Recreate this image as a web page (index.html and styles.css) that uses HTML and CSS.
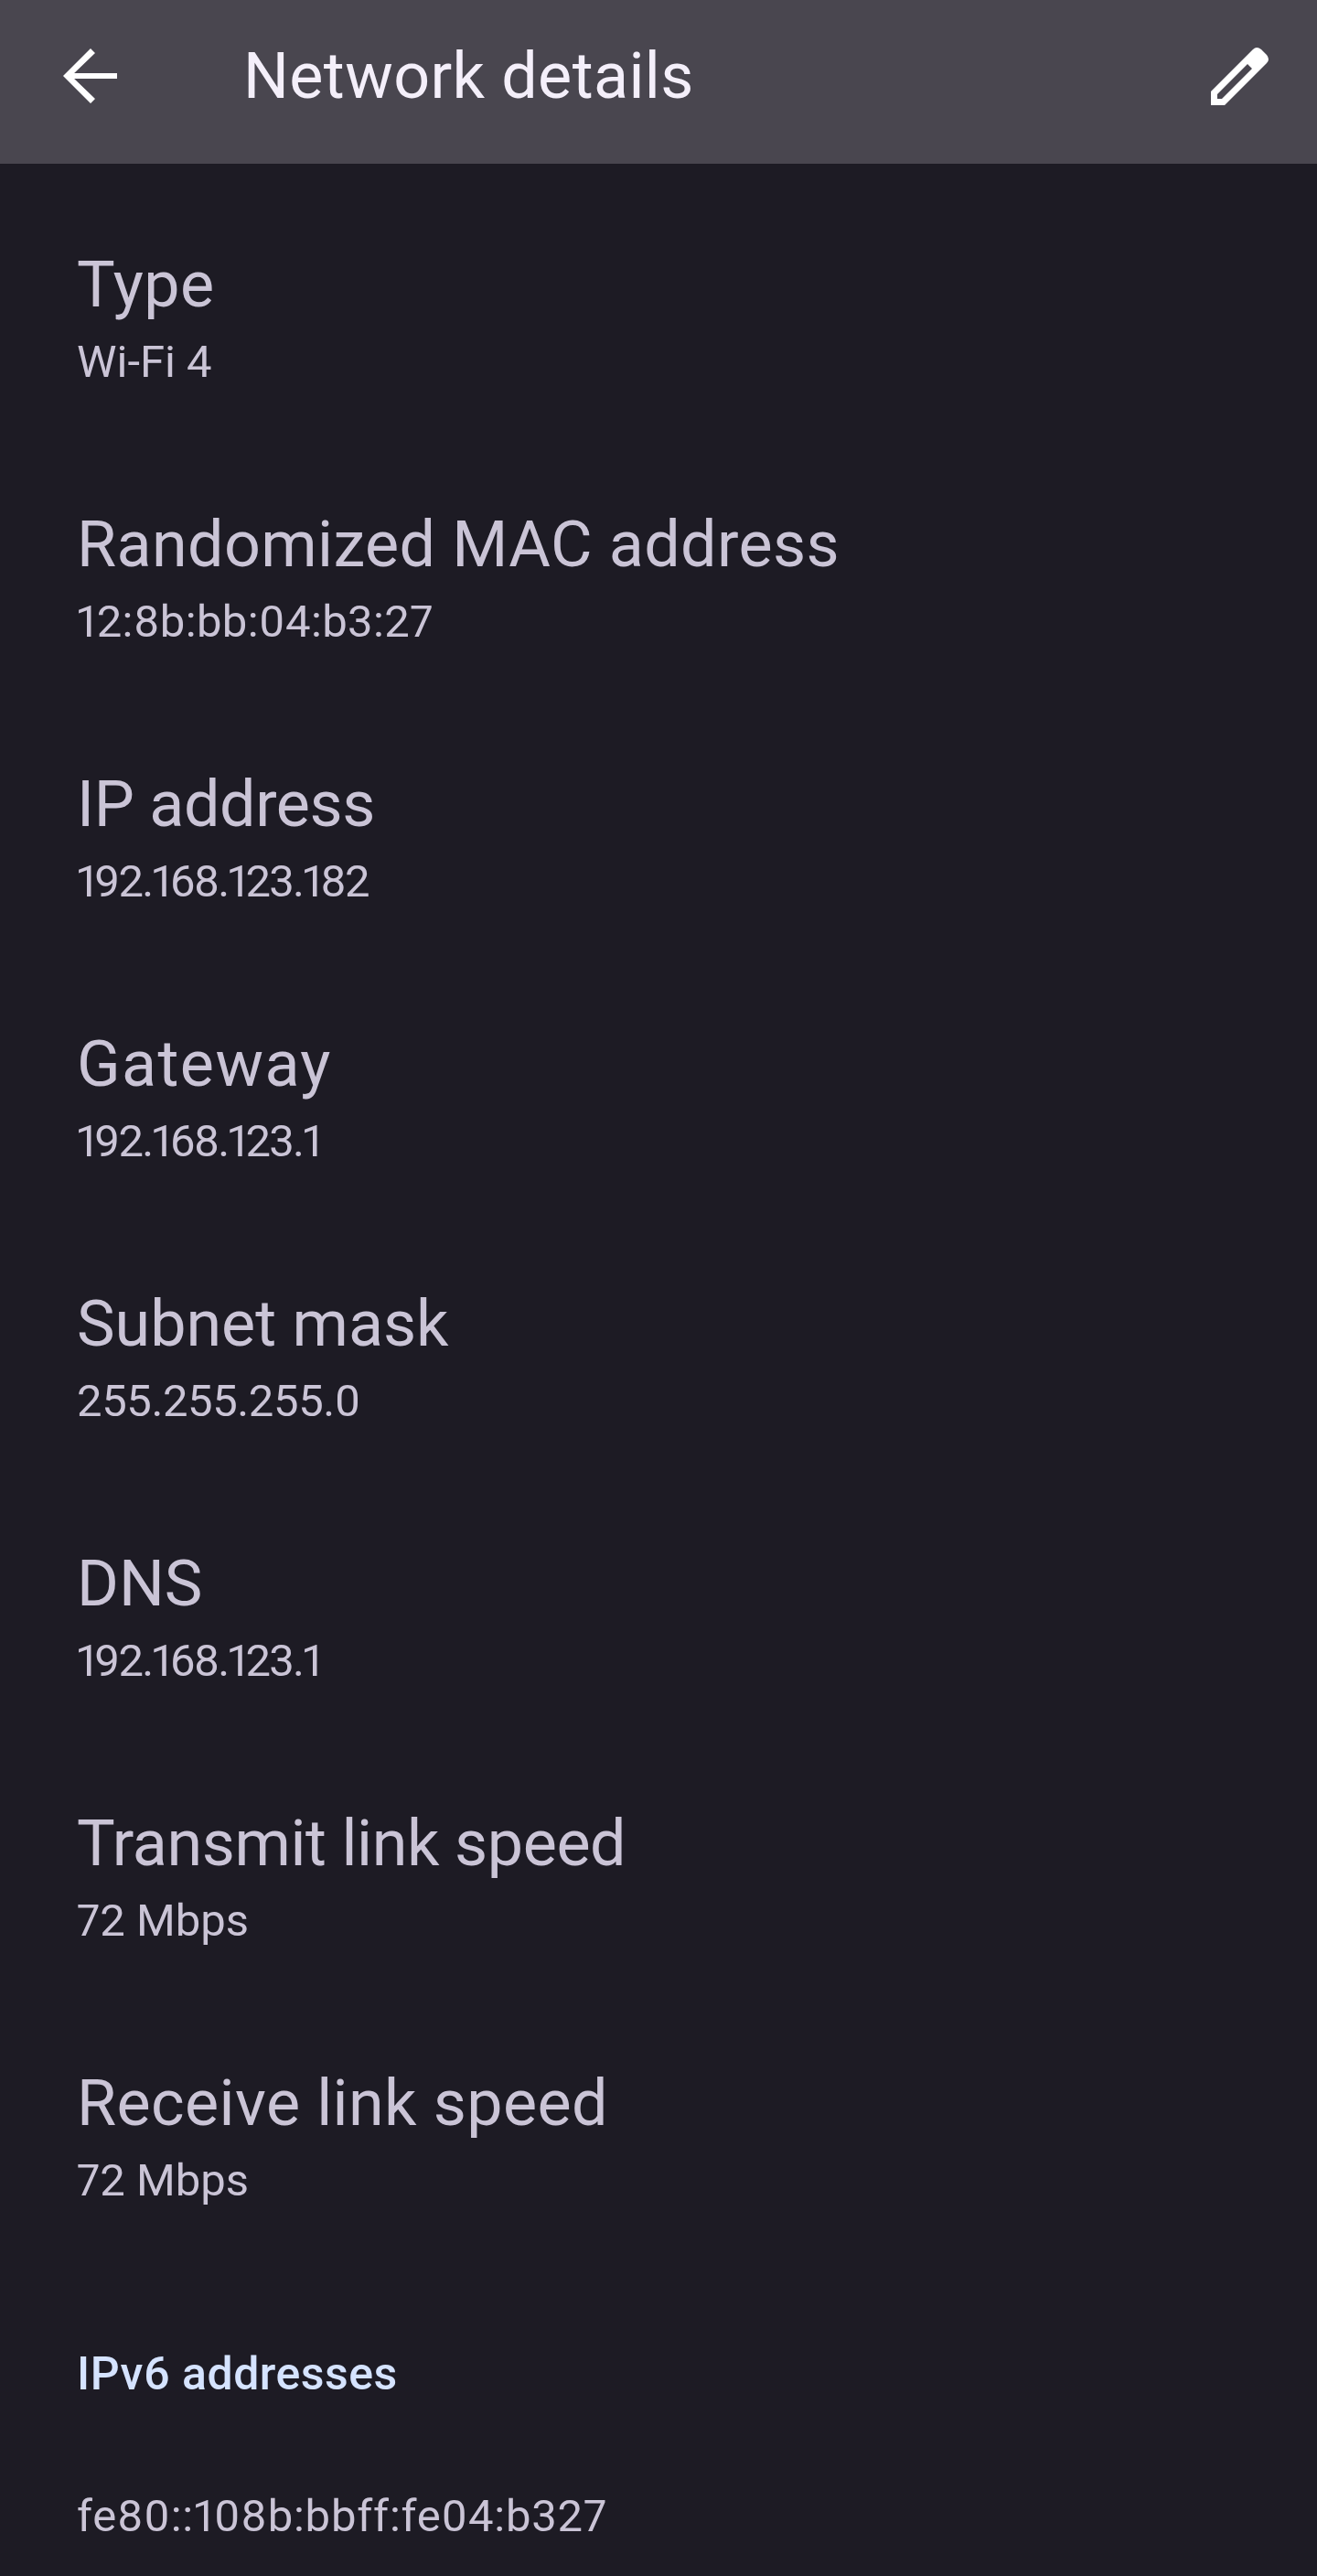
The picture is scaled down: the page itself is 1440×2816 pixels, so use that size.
FILE: index.html
```html
<!DOCTYPE html>
<html lang="en">
<head>
    <meta charset="UTF-8">
    <title>Network details</title>
    <link rel="stylesheet" href="styles.css">
</head>
<body>

    <header class="app-bar">
        <svg class="icon-back" viewBox="0 0 60 60" width="60" height="60">
            <path d="M4 31H60V37H4Z M31 4L36 9L10 34L36 59L31 64L1 34Z" fill="#fff" transform="translate(0 -4)"/>
        </svg>
        <h1 class="app-title">Network details</h1>
        <svg class="icon-edit" viewBox="0 0 64 64" width="64" height="64">
            <path fill="#fff" fill-rule="evenodd" d="M0 64V49L46 3Q50 -1 55 3L61 9Q65 14 61 18L15 64Z M7 57H12L45 24L40 19L7 52Z"/>
        </svg>
    </header>

    <main class="details">
        <div class="row"><div class="row-title wide">Type</div><div class="row-value">Wi-Fi 4</div></div>
        <div class="row"><div class="row-title wide">Randomized MAC address</div><div class="row-value wide">12:8b:bb:04:b3:27</div></div>
        <div class="row"><div class="row-title tight">IP address</div><div class="row-value ip">192.168.123.182</div></div>
        <div class="row"><div class="row-title wider">Gateway</div><div class="row-value ip">192.168.123.1</div></div>
        <div class="row"><div class="row-title">Subnet mask</div><div class="row-value tight">255.255.255.0</div></div>
        <div class="row"><div class="row-title">DNS</div><div class="row-value ip">192.168.123.1</div></div>
        <div class="row"><div class="row-title tight">Transmit link speed</div><div class="row-value">72 Mbps</div></div>
        <div class="row"><div class="row-title wide">Receive link speed</div><div class="row-value">72 Mbps</div></div>
        <h2 class="section-head">IPv6 addresses</h2>
        <div class="row-value address">fe80::108b:bbff:fe04:b327</div>
    </main>

</body>
</html>
```

FILE: styles.css
```css
body {
    margin: 0;
    height: 2816px;
    overflow: hidden;
    background-color: #1d1b24;
    font-family: Roboto, sans-serif;
    font-variant-numeric: proportional-nums;
}
.app-bar {
    box-sizing: border-box;
    height: 179px;
    background: #49464f;
    display: flex;
    align-items: center;
    padding: 0 52px 13px 68px;
}
.icon-back {
    flex: none;
}
.app-title {
    margin: 0 0 0 138px;
    flex: 1;
    font-size: 70px;
    font-weight: 400;
    letter-spacing: 0.4px;
    line-height: 1;
    color: #f4effa;
}
.icon-edit {
    flex: none;
}
.details {
    padding: 27px 84px 0;
}
.row {
    height: 284px;
    display: flex;
    flex-direction: column;
    justify-content: center;
}
.row-title {
    font-size: 70px;
    line-height: 96px;
    color: #cac4d6;
}
.row-value {
    font-size: 49px;
    line-height: 74px;
    color: #cac4d6;
}
/* the font is a bit off per string, spacing evens the widths out */
.wide {
    letter-spacing: 0.4px;
}
.wider {
    letter-spacing: 1.4px;
}
.tight {
    letter-spacing: -0.4px;
}
.ip {
    letter-spacing: -1.9px;
}
.section-head {
    margin: 85px 0 0;
    font-size: 50px;
    font-weight: 500;
    letter-spacing: 0.5px;
    line-height: 64px;
    color: #d5e3ff;
}
.address {
    margin-top: 87px;
    letter-spacing: 0.8px;
}
```
